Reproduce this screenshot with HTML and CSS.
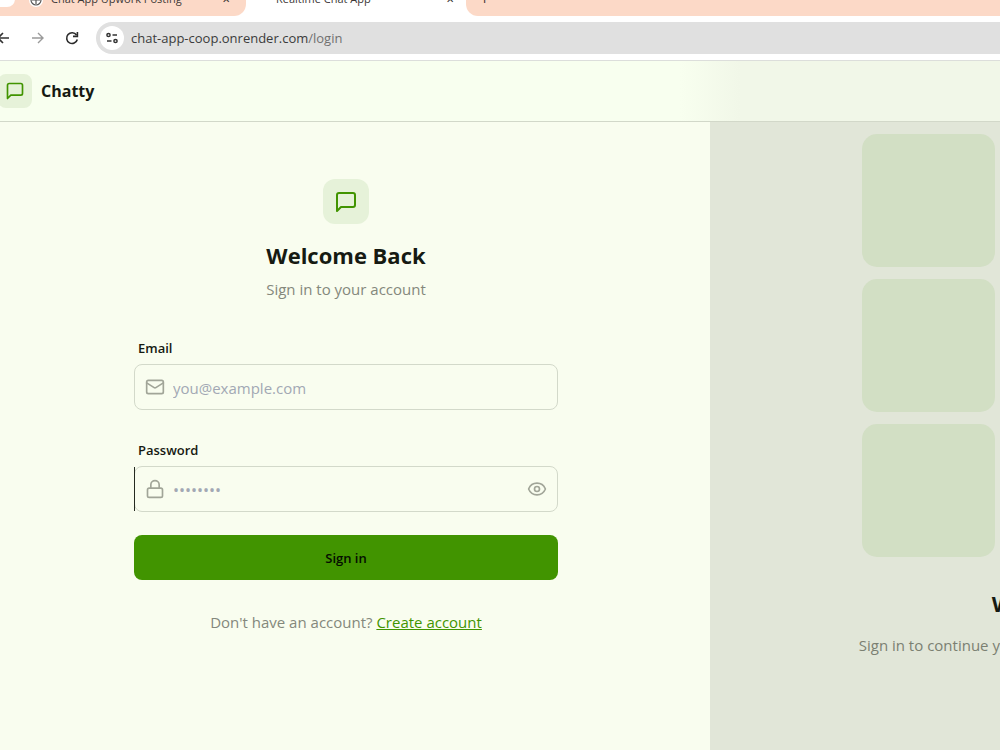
FILE: index.html
```html
<!DOCTYPE html>
<html lang="en">
<head>
    <meta charset="UTF-8">
    <title>Realtime Chat App</title>
    <link rel="stylesheet" href="styles.css">
</head>
<body>
<div class="tab-strip">
    <div class="tab tab-left">
        <span class="tab-search"></span>
        <span class="tab-icon">
            <svg width="14" height="14" viewBox="0 0 14 14" fill="none" stroke="#555" stroke-width="1.2"><circle cx="7" cy="7" r="5"/><path d="M3 7h8M7 3v8"/></svg>
        </span>
        <span class="tab-title">Chat App Upwork Posting</span>
        <span class="tab-close">✕</span>
    </div>
    <div class="tab tab-active">
        <span class="tab-title">Realtime Chat App</span>
        <span class="tab-close">✕</span>
    </div>
    <div class="tab tab-rest"><span class="tab-plus">+</span></div>
</div>

<div class="toolbar">
    <button class="nav-btn" aria-label="Back">
        <svg width="16" height="16" viewBox="0 0 16 16" fill="none" stroke="#333" stroke-width="1.6"><path d="M14 8H3M8 3L3 8l5 5"/></svg>
    </button>
    <button class="nav-btn" aria-label="Forward">
        <svg width="16" height="16" viewBox="0 0 16 16" fill="none" stroke="#9a9a9a" stroke-width="1.4"><path d="M2 8h11M8 3l5 5-5 5"/></svg>
    </button>
    <button class="nav-btn" aria-label="Reload">
        <svg width="16" height="16" viewBox="0 0 16 16" fill="none" stroke="#2b2b2b" stroke-width="1.6"><path d="M13.300 9.500A5.400 5.400 0 1 1 12.500 5"/><path d="M13.400 2v4.400H9"/></svg>
    </button>
    <div class="address-bar">
        <span class="site-info">
            <svg width="14" height="14" viewBox="0 0 14 14" fill="none" stroke="#333" stroke-width="1.500"><circle cx="3.500" cy="4" r="1.600"/><path d="M7.500 4H12M2 10h4.500"/><circle cx="10.500" cy="10" r="1.600"/></svg>
        </span>
        <span class="url">chat-app-coop.onrender.com<span class="url-path">/login</span></span>
    </div>
</div>

<header class="navbar">
    <span class="logo-box logo-small">
        <svg width="20" height="20" viewBox="0 0 24 24" fill="none" stroke="#419400" stroke-width="2" stroke-linecap="round" stroke-linejoin="round"><path d="M21 15a2 2 0 0 1-2 2H7l-4 4V5a2 2 0 0 1 2-2h14a2 2 0 0 1 2 2z"/></svg>
    </span>
    <span class="brand">Chatty</span>
</header>

<main class="login">
    <section class="form-side">
        <form class="login-form">
            <div class="form-head">
                <span class="logo-box logo-big">
                    <svg width="24" height="24" viewBox="0 0 24 24" fill="none" stroke="#419400" stroke-width="2" stroke-linecap="round" stroke-linejoin="round"><path d="M21 15a2 2 0 0 1-2 2H7l-4 4V5a2 2 0 0 1 2-2h14a2 2 0 0 1 2 2z"/></svg>
                </span>
                <h1>Welcome Back</h1>
                <p>Sign in to your account</p>
            </div>

            <label for="email">Email</label>
            <div class="field">
                <svg width="20" height="20" viewBox="0 0 24 24" fill="none" stroke="#a1a598" stroke-width="2" stroke-linecap="round" stroke-linejoin="round"><rect x="2" y="4" width="20" height="16" rx="2"/><path d="m22 7-8.970 5.700a1.940 1.940 0 0 1-2.060 0L2 7"/></svg>
                <input type="email" id="email" placeholder="you@example.com">
            </div>

            <label for="password">Password</label>
            <div class="field field-password">
                <svg width="20" height="20" viewBox="0 0 24 24" fill="none" stroke="#a1a598" stroke-width="2" stroke-linecap="round" stroke-linejoin="round"><rect x="3" y="11" width="18" height="11" rx="2"/><path d="M7 11V7a5 5 0 0 1 10 0v4"/></svg>
                <input type="password" id="password" placeholder="••••••••">
                <button type="button" class="eye-btn" aria-label="Show password">
                    <svg width="20" height="20" viewBox="0 0 24 24" fill="none" stroke="#a1a598" stroke-width="2" stroke-linecap="round" stroke-linejoin="round"><path d="M2.060 12.350a1 1 0 0 1 0-.700 10.750 10.750 0 0 1 19.880 0 1 1 0 0 1 0 .700 10.750 10.750 0 0 1-19.880 0"/><circle cx="12" cy="12" r="3"/></svg>
                </button>
            </div>

            <button type="submit" class="submit-btn">Sign in</button>
            <p class="signup">Don't have an account? <a href="#">Create account</a></p>
        </form>
    </section>

    <aside class="pattern-side">
        <div class="pattern">
            <div class="tile-grid">
                <div class="tile"></div><div class="tile"></div><div class="tile"></div>
                <div class="tile"></div><div class="tile"></div><div class="tile"></div>
                <div class="tile"></div><div class="tile"></div><div class="tile"></div>
            </div>
            <h2>Welcome back!</h2>
            <p>Sign in to continue your conversations and catch up with your messages.</p>
        </div>
    </aside>
</main>
</body>
</html>
```
FILE: styles.css
```css
* {
    box-sizing: border-box;
}

body {
    margin: 0;
    min-height: 100vh;
    display: flex;
    flex-direction: column;
    overflow: hidden;
    font-family: "Open Sans", "Noto Sans", sans-serif;
    font-size: 15px;
    line-height: 22px;
    color: #161a12;
    background: #f9fdef;
}

h1, h2, p {
    margin: 0;
}

button {
    font: inherit;
    border: none;
    padding: 0;
    background: none;
    cursor: pointer;
}

svg {
    display: block;
    flex: none;
}

/* browser bar */
.tab-strip {
    display: flex;
    height: 16px;
    background: #fff;
    font-size: 11px;
    line-height: 16px;
    color: #3c3836;
}

.tab {
    display: flex;
    align-items: flex-end;
    padding-bottom: 9px;
}

.tab-left {
    width: 246px;
    background: #fcd9c7;
    border-bottom-right-radius: 12px;
}

.tab-search {
    width: 15px;
    height: 10px;
    margin-right: 14px;
    background: #fff;
    border-bottom-right-radius: 8px;
}

.tab-icon {
    margin-right: 8px;
    background: #fff;
    border-radius: 8px;
}

.tab-title {
    flex: 1;
    white-space: nowrap;
}

.tab-close {
    padding-right: 16px;
    font-size: 10px;
}

.tab-active {
    width: 220px;
    padding-left: 30px;
}

.tab-active .tab-close {
    padding-right: 12px;
}

.tab-rest {
    flex: 1;
    padding-left: 14px;
    background: #fcd9c7;
    border-bottom-left-radius: 12px;
}

.tab-plus {
    font-size: 16px;
}

.toolbar {
    display: flex;
    align-items: center;
    height: 45px;
    background: #fff;
    border-bottom: 1px solid #dcdedb;
}

.nav-btn {
    width: 34px;
    display: flex;
    justify-content: center;
}

.nav-btn:first-child {
    width: 20px;
    justify-content: flex-end;
    margin-left: -9px;
    margin-right: 10px;
}

.address-bar {
    flex: 1;
    display: flex;
    align-items: center;
    gap: 7px;
    height: 32px;
    margin-left: 7px;
    padding-left: 4px;
    background: #e0e0e0;
    border-radius: 16px 0 0 16px;
}

.site-info {
    display: flex;
    align-items: center;
    justify-content: center;
    width: 24px;
    height: 24px;
    background: #fff;
    border-radius: 50%;
}

.url {
    font-size: 13px;
    color: #3b3b3b;
}

.url-path {
    color: #707070;
}

/* app header */
.navbar {
    display: flex;
    align-items: center;
    gap: 9px;
    height: 61px;
    background: linear-gradient(90deg, #f8ffef 68%, #f1f7e8 74%);
    border-bottom: 1px solid #d2d8c9;
}

.logo-box {
    display: flex;
    align-items: center;
    justify-content: center;
    background: #e6f2d9;
}

.logo-small {
    width: 34px;
    height: 34px;
    margin-left: -2px;
    border-radius: 8px;
}

.logo-big {
    width: 46px;
    height: 45px;
    border-radius: 12px;
}

.brand {
    font-size: 16px;
    font-weight: 700;
}

/* login page */
.login {
    flex: 1;
    display: flex;
}

.form-side {
    width: 71%;
    padding: 57px 18px 0 0;
}

.login-form {
    width: 424px;
    margin: 0 auto;
}

.form-head {
    display: flex;
    flex-direction: column;
    align-items: center;
    margin-bottom: 37px;
}

.form-head h1 {
    margin: 15px 0 7px;
    font-size: 22px;
    line-height: 32px;
}

.form-head p,
.signup {
    color: #84887c;
}

.login-form label {
    display: block;
    padding: 0 4px 5px;
    font-size: 13px;
    font-weight: 600;
}

.field {
    position: relative;
    display: flex;
    align-items: center;
    gap: 8px;
    height: 46px;
    margin-bottom: 29px;
    padding: 0 10px;
    border: 1px solid #d3d9ca;
    border-radius: 8px;
}

.field input {
    flex: 1;
    min-width: 0;
    padding: 2px 0 0;
    border: none;
    outline: none;
    background: none;
    font: inherit;
    color: inherit;
}

.field input::placeholder {
    color: #a2a8b4;
}

.field-password {
    margin-bottom: 23px;
}

.field-password input {
    font-size: 16px;
}

.field-password::before {
    content: "";
    position: absolute;
    top: 0;
    bottom: 0;
    left: -1px;
    width: 1px;
    background: #252a20;
}

.submit-btn {
    width: 100%;
    height: 45px;
    background: #419400;
    border-radius: 8px;
    color: #050d00;
    font-size: 13px;
    font-weight: 600;
}

.signup {
    margin-top: 31px;
    text-align: center;
}

.signup a {
    color: #419400;
}

.pattern-side {
    flex: 1;
    min-width: 0;
    padding: 12px 0 0 152px;
    overflow: hidden;
    background: #e1e6d8;
}

.pattern {
    width: 424px;
    text-align: center;
}

.tile-grid {
    display: grid;
    grid-template-columns: repeat(3, 1fr);
    gap: 12px;
    margin-bottom: 30px;
}

.tile {
    height: 133px;
    background: #d2dfc4;
    border-radius: 15px;
}

.pattern h2 {
    margin-bottom: 15px;
    font-size: 22px;
    line-height: 32px;
}

.pattern p {
    margin: 0 -8px;
    color: #7b8072;
}
```
